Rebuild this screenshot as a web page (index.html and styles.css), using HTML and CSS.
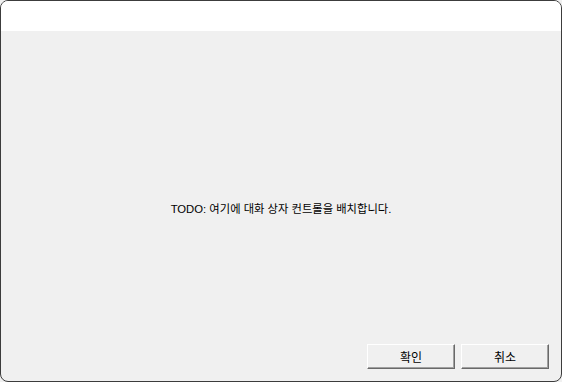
FILE: index.html
```html
<!DOCTYPE html>
<html>
	<head>
		<meta charset="UTF-8">
		<title>대화 상자</title>
		<link rel="stylesheet" href="styles.css">
	</head>
	<body>
		<div id="dialog">
			<div class="titlebar"></div>
			<div class="content">
				<p class="message">TODO: 여기에 대화 상자 컨트롤을 배치합니다.</p>
				<div class="buttons">
					<button class="btn">확인</button>
					<button class="btn">취소</button>
				</div>
			</div>
		</div>
	</body>
</html>
```

FILE: styles.css
```css
* {
	margin: 0;
	padding: 0;
	box-sizing: border-box;
}
body {
	width: 562px;
	height: 382px;
	background-color: #f0f0f0;
	font-family: "Liberation Sans", "Noto Sans CJK KR", sans-serif;
	font-size: 12px;
	color: #000;
}
#dialog {
	width: 562px;
	height: 382px;
	border: 1px solid #3c3c3c;
	border-radius: 8px;
	overflow: hidden;
	display: flex;
	flex-direction: column;
	background-color: #f0f0f0;
}
.titlebar {
	height: 30px;
	background-color: #fff;
}
.content {
	flex: 1;
	display: flex;
	flex-direction: column;
}
.message {
	flex: 1;
	display: flex;
	align-items: center;
	justify-content: center;
	padding-top: 41px;
	font-size: 11.3px;
}
.buttons {
	display: flex;
	justify-content: flex-end;
	gap: 6px;
	padding: 0 12px 12px 0;
}
.btn {
	width: 88px;
	height: 25px;
	font-family: inherit;
	font-size: 12px;
	color: #000;
	background-color: #f0f0f0;
	border: none;
	border-top: 1px solid #fff;
	border-left: 1px solid #fff;
	border-right: 1px solid #696969;
	border-bottom: 1px solid #696969;
	box-shadow: inset -1px -1px 0 #a0a0a0;
	cursor: pointer;
}
```
